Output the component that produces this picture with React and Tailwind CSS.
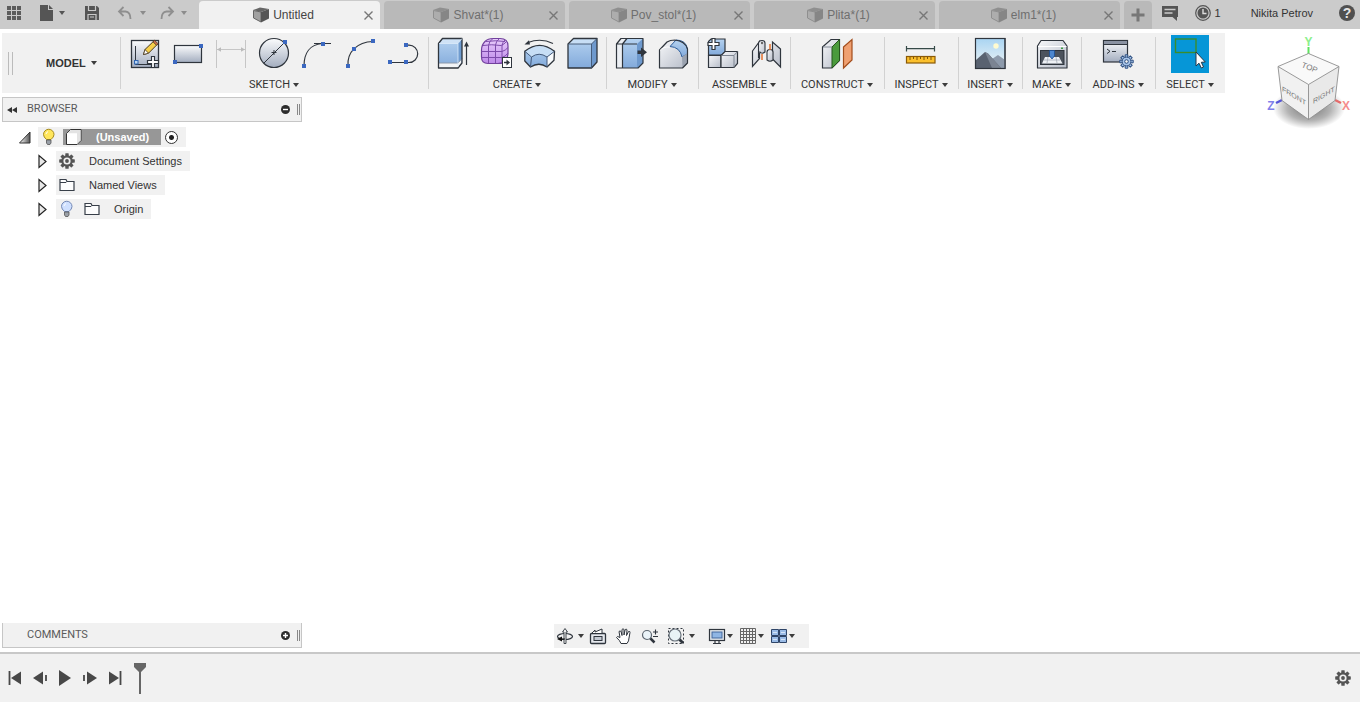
import { useState } from 'react';

const Caret = ({ className = 'text-[#3c3c3c]' }) => (
    <svg width="6" height="4" viewBox="0 0 6 4" className={`shrink-0 ${className}`} fill="currentColor">
        <path d="M0 0h6L3 4z" />
    </svg>
);

const Icon = ({ size = 32, children }) => (
    <svg width={size} height={size} viewBox={`0 0 ${size} ${size}`} className="block shrink-0 overflow-visible" fill="none">
        {children}
    </svg>
);

// Shared gradients, referenced by id from every icon
const Gradients = () => (
    <svg width="0" height="0" className="absolute" aria-hidden="true">
        <defs>
            <linearGradient id="steel" x1="0" y1="0" x2="0" y2="1">
                <stop offset="0" stopColor="#fbfcfd" />
                <stop offset="1" stopColor="#a3adbf" />
            </linearGradient>
            <linearGradient id="pale" x1="0" y1="0" x2="1" y2="1">
                <stop offset="0" stopColor="#f7f8fa" />
                <stop offset="1" stopColor="#b6bcc8" />
            </linearGradient>
            <linearGradient id="blue" x1="0" y1="0" x2="0" y2="1">
                <stop offset="0" stopColor="#b5d2f0" />
                <stop offset="1" stopColor="#82aadb" />
            </linearGradient>
            <linearGradient id="purple" x1="0" y1="0" x2="0" y2="1">
                <stop offset="0" stopColor="#e9cdfc" />
                <stop offset="1" stopColor="#bd88e8" />
            </linearGradient>
            <linearGradient id="sky" x1="0" y1="0" x2="0" y2="1">
                <stop offset="0" stopColor="#a9d4f2" />
                <stop offset="1" stopColor="#f2f6f6" />
            </linearGradient>
            <linearGradient id="corner" x1="0" y1="0" x2="1" y2="0">
                <stop offset="0" stopColor="#fff" />
                <stop offset="1" stopColor="#555" />
            </linearGradient>
            <radialGradient id="cubeShadow">
                <stop offset="0" stopColor="#000" stopOpacity="0.55" />
                <stop offset="0.6" stopColor="#000" stopOpacity="0.3" />
                <stop offset="1" stopColor="#000" stopOpacity="0" />
            </radialGradient>
        </defs>
    </svg>
);

const INK = '#2f353d';

const Dots = ({ points }) => points.map(([x, y]) => (
    <rect key={`${x}-${y}`} x={x - 2} y={y - 2} width="4" height="4" fill="#3b68c0" />
));

const PlusBadge = ({ x, y }) => (
    <path
        transform={`translate(${x} ${y})`}
        d="M-1.5-5.5h3v4h4v3h-4v4h-3v-4h-4v-3h4z"
        fill="#fff" stroke={INK} strokeWidth="1.2"
    />
);

const Gear = ({ size = 16, color = '#555', hole = '#f1f1f1' }) => (
    <Icon size={size}>
        <g transform={`translate(${size / 2} ${size / 2})`}>
            {[0, 45, 90, 135].map((a) => (
                <rect key={a} x="-1.7" y="-7.8" width="3.4" height="15.6" rx="0.6" fill={color} transform={`rotate(${a})`} />
            ))}
            <circle r="5.8" fill={color} />
            <circle r="3.6" fill={hole} />
            <circle r="1.9" fill={color} />
        </g>
    </Icon>
);

/* ---------- toolbar icons ---------- */

const CreateSketch = () => (
    <Icon>
        <rect x="2.5" y="2.5" width="27" height="27" fill="url(#steel)" stroke={INK} strokeWidth="1.3" />
        <path d="M6.5 8v18.5H24" stroke={INK} />
        <rect x="5.5" y="22.5" width="3.5" height="3.5" fill="#bcd6f2" stroke="#2f67b5" />
        <path d="M14.5 16.5l1.5-5L25 2.8l3.5 3.4-9 9z" fill="#f6cf4a" stroke="#4a3a20" />
        <path d="M14.5 16.5l1.5-5 3.5 3.7z" fill="#fff" stroke="#4a3a20" strokeWidth="0.8" />
        <path d="M24 3.8L25.6 2.3l3.5 3.4-1.6 1.6z" fill="#d0704d" stroke="#4a3a20" strokeWidth="0.8" />
        <PlusBadge x={24} y={24} />
    </Icon>
);

const Rectangle = () => (
    <Icon>
        <rect x="2.5" y="7.5" width="27" height="17" fill="url(#steel)" stroke={INK} strokeWidth="1.2" />
        <Dots points={[[29, 8], [3, 24]]} />
    </Icon>
);

const Dimension = () => (
    <Icon>
        <path d="M1.5 2v28M30.5 2v28M2 11.5h28" stroke="#c6c6c6" />
        <path d="M2 11.5l4-2.2v4.4zM30 11.5l-4-2.2v4.4z" fill="#bbb" />
    </Icon>
);

const Circle = () => (
    <Icon>
        <circle cx="16" cy="15" r="14.5" fill="url(#steel)" stroke={INK} strokeWidth="1.2" />
        <path d="M6 25L27 4M13.5 14.5h5M16 12v5" stroke={INK} />
        <Dots points={[[27, 4]]} />
    </Icon>
);

const TangentArc = () => (
    <Icon>
        <path d="M3 28C3 15 9 6.5 21 5.5M13 5.5h17" stroke={INK} strokeWidth="1.2" />
        <Dots points={[[3, 28], [22, 6]]} />
    </Icon>
);

const PointArc = () => (
    <Icon>
        <path d="M4 28C3 14 13 4 29 3.5" stroke={INK} strokeWidth="1.2" />
        <Dots points={[[4, 28], [10, 11], [29, 3]]} />
    </Icon>
);

const Slot = () => (
    <Icon>
        <path d="M3 24.5h19a8.7 8.7 0 0 0 0-17.4h-3" stroke={INK} strokeWidth="1.2" />
        <Dots points={[[3, 24], [19, 24], [19, 7]]} />
    </Icon>
);

const Extrude = () => (
    <Icon>
        <path d="M1.5 5.5l4-5H25V25l-4 5H1.5z" fill="url(#blue)" />
        <path d="M1.5 5.5l4-5H25l-4 5z" fill="#cfe2f6" />
        <path d="M21 5.500l4-5V25l-4 5z" fill="#6f9cd0" />
        <path d="M2 25h19l3.500-4V25L21 30H2z" fill="#f2f4f7" />
        <path d="M1.500 25H21l4-4.500" stroke="#8b98aa" />
        <path d="M1.500 5.500l4-5H25V25l-4 5H1.500z" stroke={INK} strokeWidth="1.3" strokeLinejoin="round" />
        <path d="M2 5.500h19l4-5M21 5.500V29" stroke="#dcebfa" strokeWidth="0.8" />
        <path d="M29.500 27V6" stroke={INK} strokeWidth="1.200" />
        <path d="M27 8.500L29.500 3.500l2.500 5z" fill={INK} />
    </Icon>
);

const Form = () => (
    <Icon>
        <path d="M1.500 12Q1.500 7 5 3.500 8 .5 13 .5h7Q28 .5 28 8v8q0 4-3 7-2.500 2.500-7 2.500H8Q1.500 25.500 1.500 19z" fill="url(#purple)" stroke="#71409c" strokeWidth="1.200" />
        <path d="M3 7.500Q11 6 21 7.500 24 6.500 26.500 3.500M1.500 13.500H22q3.500-1 6-4M1.500 19.500H22q3.500-1 6-4.500M8.500 25V7.500Q9 3 13 .5M15.500 25V7Q16 3 19.500.5M22 25V8Q22.500 4 25 2M6 3.500q10-1.500 19 0" stroke="#7d4bab" />
        <rect x="22.500" y="19.500" width="9" height="10" fill="#fff" stroke={INK} />
        <path d="M24 24.500h3" stroke={INK} strokeWidth="1.500" />
        <path d="M26.500 21.500l3.500 3-3.500 3z" fill={INK} />
    </Icon>
);

const Revolve = () => (
    <Icon>
        <path d="M30 5.500Q18-.5 5 4.500" stroke={INK} strokeWidth="1.100" />
        <path d="M1.500 6.500L6 2.200l1 4.300z" fill={INK} />
        <path d="M1.800 13.300Q16.500 1.500 31.500 13.300l-.5 9L24 29q-8-5.500-16.500 0L1.800 23z" fill="url(#blue)" />
        <path d="M31.500 13.300l-.5 9L24 29V19z" fill="#f8fafc" />
        <path d="M1.800 13.300Q16.500 1.500 31.500 13.300L24 19Q16 13.500 8.500 19z" fill="#c7def5" />
        <path d="M1.800 13.300Q16.500 1.500 31.500 13.300l-.5 9L24 29q-8-5.500-16.500 0L1.800 23z" stroke={INK} strokeWidth="1.300" strokeLinejoin="round" />
        <path d="M1.800 13.300L8.500 19Q16 13.500 24 19l7.500-5.700M8.500 19l-1 10M24 19v10" stroke="#43597a" />
    </Icon>
);

const BoxSolid = () => (
    <Icon>
        <path d="M2 6l5.500-5.500H31V24l-5.500 6H2z" fill="url(#blue)" />
        <path d="M2 6L7.500.5H31L25.500 6z" fill="#c7def5" />
        <path d="M25.500 6L31 .5V24l-5.500 6z" fill="#6e99cd" />
        <path d="M2 6L7.500.5H31V24l-5.500 6H2z" stroke={INK} strokeWidth="1.300" strokeLinejoin="round" />
        <path d="M2.500 6h23L31 .5M25.500 6v24" stroke="#3e5470" strokeWidth="0.900" />
    </Icon>
);

const PressPull = () => (
    <Icon>
        <path d="M1.500 6L6 .5h6L7.500 6v24h-6z" fill="#eceff3" />
        <path d="M7.500 6L12 .5h16V25l-5 5H7.500z" fill="url(#blue)" />
        <path d="M22 6l6-5.500V25l-6 5z" fill="#6e99cd" />
        <path d="M1.500 6L6 .5h22V25l-5 5H1.500zM1.500 6H22M7.500 30V6L12 .5" stroke={INK} strokeWidth="1.200" strokeLinejoin="round" />
        <path d="M22.500 12.500H26v-3l6 4.800-6 4.700v-3h-3.500z" fill={INK} />
    </Icon>
);

const Fillet = () => (
    <Icon>
        <path d="M1.500 12L9 4q3-2 8-2 9 1 12.500 8v15l-5 5h-23z" fill="url(#pale)" />
        <path d="M12 8.500L18 2q10 0 11.500 9v5L24 19q-2-10-12-10.500z" fill="url(#blue)" stroke="#2f5f9c" />
        <path d="M24 19l5.500-4v10l-5 5z" fill="#9aa2af" />
        <path d="M1.500 12L9 4q3-2 8-2 10 1 12.500 9v14l-5 5h-23z" stroke={INK} strokeWidth="1.200" strokeLinejoin="round" />
        <path d="M2 12.500q3-4 10-3.500" stroke="#fff" />
    </Icon>
);

const NewComponent = () => (
    <Icon>
        <path d="M1.500 3.500L4 1h14v13l-3 3H1.500z" fill="url(#blue)" stroke={INK} strokeWidth="1.200" />
        <path d="M1.500 17.500H14v12H1.500z" fill="url(#pale)" stroke={INK} strokeWidth="1.200" />
        <path d="M14 17.500l4-4h12.500v12l-3.500 4H14z" fill="url(#pale)" stroke={INK} strokeWidth="1.200" />
        <path d="M14.500 17.500H27l3.500-4M27 17.500v12" stroke="#7f8793" />
        <PlusBadge x={6.5} y={6} />
    </Icon>
);

const Joint = () => (
    <Icon>
        <path d="M2.500 13l7-9.500v17l-7 8zM30.500 11l-8-7v17l8 8z" fill="url(#pale)" stroke={INK} strokeWidth="1.200" />
        <path d="M8.500 5Q9 2.500 12 2.500T15 5v9q-3 2.500-5 0l-1.500 6z" fill="url(#pale)" stroke={INK} strokeWidth="1.100" />
        <path d="M17 14q0-2.500 3-2.500T23 14v8q-3 2.500-6 0z" fill="url(#pale)" stroke={INK} strokeWidth="1.100" />
        <path d="M12 16v6M20 6v6" stroke="#e37230" strokeWidth="1.500" />
        <circle cx="12" cy="5" r="1.200" fill="#666" />
    </Icon>
);

const OffsetPlane = () => (
    <Icon>
        <path d="M1.500 9L10 1.500h8.500v21L11 30H1.500z" fill="url(#pale)" stroke={INK} strokeWidth="1.200" />
        <path d="M11 9l7.500-7.500v21L11 30z" fill="#4a9a3c" stroke="#25541d" />
        <path d="M2 9h9" stroke="#858c97" />
        <path d="M22.500 9L31 1.500V22L22.500 30z" fill="#efa071" stroke="#a34d1c" strokeWidth="1.200" />
    </Icon>
);

const Measure = () => (
    <Icon>
        <path d="M1.500 8v5.500M29.500 8v5.500M2 10.700h27" stroke="#364a48" strokeWidth="1.200" />
        <rect x="1.500" y="18.500" width="28.500" height="6.500" fill="#fbc02d" stroke="#8b5a07" strokeWidth="1.200" />
        <path d="M5 19v3M8.500 19v2M12 19v3M15.500 19v2M19 19v3M22.500 19v2M26 19v3" stroke="#7d5208" />
    </Icon>
);

const Decal = () => (
    <Icon>
        <rect x="1.500" y=".5" width="29.500" height="30" fill="url(#sky)" stroke={INK} />
        <circle cx="22" cy="8" r="2.700" fill="#fffbd0" />
        <path d="M15 23l9-6 7 5v8H15z" fill="#8d9aab" />
        <path d="M2 22l9-8 3 1.500 13 14.500H2z" fill="#596270" />
        <path d="M11 14l3 1.500L27 30H18z" fill="#7b8492" />
        <rect x="1.500" y=".5" width="29.500" height="30" stroke={INK} strokeWidth="1.200" />
    </Icon>
);

const Print3D = () => (
    <Icon>
        <path d="M1.500 8L5 2.500h22L31 8v22H1.500z" fill="url(#pale)" stroke={INK} strokeWidth="1.200" strokeLinejoin="round" />
        <path d="M2 8.500h28.500" stroke="#fff" />
        <rect x="4.500" y="12.500" width="23.500" height="14" fill="#4c535d" stroke={INK} />
        <path d="M9 19h14l3.500 6.500H6z" fill="#eef1f5" />
        <path d="M8 22h16M12 19l-1 6M20 19l1 6" stroke="#a6adb8" strokeWidth="0.800" />
        <path d="M13.500 12.500h5V18L16 21l-2.500-3z" fill="#4d87cf" stroke="#1d4f94" strokeWidth="0.800" />
        <rect x="25" y="9.500" width="2" height="1.500" fill="#3b9a45" />
    </Icon>
);

const Scripts = () => (
    <Icon>
        <rect x="1.500" y="2.500" width="24" height="21.500" fill="url(#steel)" stroke={INK} strokeWidth="1.200" />
        <rect x="2" y="3" width="23" height="3.500" fill="#8a92a2" />
        <path d="M2 6.500h23" stroke={INK} />
        <path d="M5 11l3 2.300-3 2.300M10 13.500h4" stroke={INK} />
        <g transform="translate(24.500 23.500)" fill="#a9c6ea" stroke="#2c4e80">
            {[0, 45, 90, 135, 180, 225, 270, 315].map((a) => (
                <path key={a} d="M-1.300-4.500v-2.200h2.600v2.200" transform={`rotate(${a})`} />
            ))}
            <circle r="4.400" />
            <circle r="1.800" fill="#f1f1f1" />
        </g>
    </Icon>
);

const SelectTool = () => (
    <Icon size={38}>
        <rect x="4.500" y="4" width="20.500" height="13.500" stroke="#3c8c2b" strokeWidth="1.400" />
        <path d="M25 17v14l3-2.800 2.300 4.800 2.200-1-2.200-4.700 4-.3z" fill="#fff" stroke="#24384a" />
    </Icon>
);

const groups = [
    { label: 'SKETCH', width: 'w-[308px]', icons: [CreateSketch, Rectangle, Dimension, Circle, TangentArc, PointArc, Slot] },
    { label: 'CREATE', width: 'w-[178px]', icons: [Extrude, Form, Revolve, BoxSolid] },
    { label: 'MODIFY', width: 'w-[92px]', icons: [PressPull, Fillet] },
    { label: 'ASSEMBLE', width: 'w-[92px]', icons: [NewComponent, Joint] },
    { label: 'CONSTRUCT', width: 'w-[94px]', icons: [OffsetPlane] },
    { label: 'INSPECT', width: 'w-[74px]', icons: [Measure] },
    { label: 'INSERT', width: 'w-[64px]', icons: [Decal] },
    { label: 'MAKE', width: 'w-[59px]', icons: [Print3D] },
    { label: 'ADD-INS', width: 'w-[74px]', icons: [Scripts] },
    { label: 'SELECT', width: 'w-[70px]', icons: [SelectTool], selected: true },
];

const tabs = ['Untitled', 'Shvat*(1)', 'Pov_stol*(1)', 'Plita*(1)', 'elm1*(1)'];

const TabBar = () => {
    const [active, setActive] = useState(0);

    return (
        <header className="flex h-[29px] bg-[#cbcbcb] text-[#333]">
            <div className="flex w-[199px] shrink-0 items-center pb-[3px] pl-[6px] text-[#555]">
                <button aria-label="Show data panel">
                    <Icon size={16}>
                        <path d="M1 1h4v4H1zM6 1h4v4H6zM11 1h4v4h-4zM1 6h4v4H1zM6 6h4v4H6zM11 6h4v4h-4zM1 11h4v4H1zM6 11h4v4H6zM11 11h4v4h-4z" fill="#5c5c5c" />
                    </Icon>
                </button>
                <button aria-label="File" className="ml-4 flex items-center gap-[5px]">
                    <Icon size={16}>
                        <path d="M2 0h8v5h5v11H2z" fill="#555" />
                        <path d="M11 0l4 4h-4z" fill="#555" />
                    </Icon>
                    <Caret className="text-[#555]" />
                </button>
                <button aria-label="Save" className="ml-[19px]">
                    <Icon size={16}>
                        <path d="M1 1h12l2 2v12H1z" fill="#555" />
                        <path d="M4.500 1v4.500h7V1M4 15V9.500h8V15" stroke="#cbcbcb" strokeWidth="1.200" />
                        <path d="M6 12h4" stroke="#cbcbcb" />
                    </Icon>
                </button>
                <button aria-label="Undo" className="ml-[17px] flex items-center gap-[7px]">
                    <Icon size={16}>
                        <path d="M2 6.500h6.500q5 .5 5 7.500M6.500 2L2 6.500 6.500 11" stroke="#8f8f8f" strokeWidth="1.800" />
                    </Icon>
                    <Caret className="text-[#8c8c8c]" />
                </button>
                <button aria-label="Redo" className="ml-[13px] flex items-center gap-[6px]">
                    <Icon size={16}>
                        <path d="M14 6.500H7.500q-5 .5-5 7.500M9.500 2L14 6.500 9.500 11" stroke="#8f8f8f" strokeWidth="1.800" />
                    </Icon>
                    <Caret className="text-[#8c8c8c]" />
                </button>
            </div>

            <div className="flex gap-1 pt-px text-xs" role="tablist">
                {tabs.map((name, i) => (
                    <div
                        key={name}
                        className={`flex w-[181px] items-center rounded-t pr-[7px] pl-2 ${i === active ? 'bg-[#f1f1f1] text-[#444]' : 'bg-[#b9b9b9] text-[#6f6f6f]'}`}
                    >
                        <button role="tab" aria-selected={i === active} onClick={() => setActive(i)} className="flex h-full flex-1 items-center justify-center gap-1">
                            <Icon size={16}>
                                <g opacity={i === active ? 1 : 0.5}>
                                    <path d="M0 3L7 .5l9 1.500-8 3z" fill="#666" />
                                    <path d="M.5 3.500L8 5v10l-7.500-4z" fill="#a2a2a2" stroke="#666" />
                                    <path d="M8 5l8-3v9.500l-8 4z" fill="#555" />
                                </g>
                            </Icon>
                            {name}
                        </button>
                        <button aria-label={`Close ${name}`} className="ml-1">
                            <Icon size={9}>
                                <path d="M.5.5l8 8M8.500.5l-8 8" stroke="#777" strokeWidth="1.400" />
                            </Icon>
                        </button>
                    </div>
                ))}
                <button aria-label="New design" className="flex w-7 items-center justify-center rounded-t bg-[#b9b9b9]">
                    <Icon size={14}>
                        <path d="M7 .5v13M.5 7h13" stroke="#777" strokeWidth="3" />
                    </Icon>
                </button>
            </div>

            <div className="ml-auto flex items-center pr-[5px] pb-[3px] text-[11px]">
                <button aria-label="Comments">
                    <Icon size={16}>
                        <path d="M0 1h16v11h-1v4l-4.500-4H0z" fill="#555" />
                        <path d="M2.500 4.500h11M2.500 8h8" stroke="#cbcbcb" strokeWidth="1.300" />
                    </Icon>
                </button>
                <button aria-label="Job status" className="ml-[17px] flex items-center gap-1">
                    <Icon size={16}>
                        <circle cx="8" cy="8" r="7.300" stroke="#555" strokeWidth="1.200" />
                        <circle cx="8" cy="8" r="5.500" fill="#555" />
                        <path d="M8 4v4.500h3.500" stroke="#ddd" strokeWidth="1.400" />
                    </Icon>
                    1
                </button>
                <button className="ml-[30px]">Nikita Petrov</button>
                <button aria-label="Help" className="ml-[26px] flex size-4 items-center justify-center rounded-full bg-[#505050] text-sm font-bold text-[#e4e4e4]">?</button>
            </div>
        </header>
    );
};

const Toolbar = () => (
    <div className="mt-1 ml-[2px] flex h-[60px] w-fit bg-[#f1f1f1] text-[11px] text-[#333]">
        <div className="flex w-[118px] items-center pl-[6px]">
            <div className="h-[23px] w-[5px] border-x border-[#bbb]" />
            <button className="ml-[33px] flex items-center gap-[5px] text-[11px] font-bold">
                MODEL <Caret />
            </button>
        </div>
        {groups.map((group) => (
            <div key={group.label} className={`relative flex flex-col items-center ${group.width}`}>
                <div className="absolute top-1 left-0 h-[52px] w-px bg-[#d2d2d2]" />
                <div className={`flex h-[45px] gap-[11px] ${group.selected ? 'pt-[2px]' : 'pt-[5px]'}`}>
                    {group.icons.map((ToolIcon) => (
                        <button key={ToolIcon.name} aria-label={group.label} className={group.selected ? 'size-[38px] bg-[#0696d7]' : 'size-8'}>
                            <ToolIcon />
                        </button>
                    ))}
                </div>
                <button className="flex items-center gap-[3px] font-['Roboto',sans-serif] leading-4">
                    {group.label} <Caret />
                </button>
            </div>
        ))}
    </div>
);

const Panel = ({ title, open }) => (
    <div className={`flex h-[25px] w-[300px] items-center border-[#c6c6c6] bg-[#f1f1f1] text-[#5a5a5a] ${open ? 'border' : 'border-x border-b'}`}>
        <div className="flex w-6 items-center pl-1">
            {open && (
                <button aria-label="Collapse browser">
                    <Icon size={10}>
                        <path d="M5 2v6L0 5zM10 2v6L5 5z" fill="#333" />
                    </Icon>
                </button>
            )}
        </div>
        <span className="flex-1 font-['Roboto',sans-serif] text-[11px]">{title}</span>
        <button aria-label={`Toggle ${title.toLowerCase()}`}>
            <Icon size={9}>
                <circle cx="4.500" cy="4.500" r="4.500" fill="#2d2d2d" />
                <path d={open ? 'M2 4.500h5' : 'M2 4.500h5M4.500 2v5'} stroke="#fff" strokeWidth="1.400" />
            </Icon>
        </button>
        <div className="mr-px ml-[7px] h-[11px] w-[3px] border-x border-[#888]" />
    </div>
);

const Bulb = ({ fill, stroke }) => (
    <Icon size={16}>
        <path d="M5.500 10.500Q2.500 8 2.500 5.500a5 5 0 0 1 10.500 0q0 2.500-3 5z" fill={fill} stroke={stroke} />
        <path d="M5.500 11H10v3l-1 1.500H6.500l-1-1.500z" fill="#9aa0a8" stroke="#555" strokeWidth="0.800" />
        <path d="M5 5q.5-2 2-2.300" stroke="#fff" />
    </Icon>
);

const Folder = () => (
    <Icon size={16}>
        <path d="M1 13.500v-11h6l1 2h7v9z" fill="#fdfdfd" stroke="#383f49" strokeWidth="1.200" />
        <path d="M1 5.500h6l1-1" stroke="#383f49" />
    </Icon>
);

const TreeRow = ({ label, children }) => (
    <li className="flex items-center">
        <button aria-label={`Expand ${label}`} className="w-5">
            <Icon size={13}>
                <path d="M3 .5v12l7-6z" fill="#e8e8e8" stroke="#222" strokeWidth="1.200" />
            </Icon>
        </button>
        <div className="flex h-5 items-center bg-[#f1f1f1] pr-2 pl-[3px]">
            {children}
            <span className="ml-[14px]">{label}</span>
        </div>
    </li>
);

const Browser = () => (
    <aside className="mt-1 ml-[2px] w-[300px] text-[11px] text-[#333]">
        <Panel title="BROWSER" open />
        <div className="mt-[5px] flex items-center pl-4">
            <button aria-label="Collapse document" className="w-5">
                <Icon size={13}>
                    <path d="M1.500 12L12 1v11z" fill="url(#corner)" stroke="#333" />
                </Icon>
            </button>
            <div className="flex h-5 items-center bg-[#f1f1f1] pr-2 pl-[3px]">
                <Bulb fill="#ffe65c" stroke="#a58a1c" />
                <button className="ml-[6px] flex h-4 w-[98px] items-center bg-[#979797] pl-[3px] text-[11px] font-bold text-white">
                    <Icon size={16}>
                        <path d="M.5 4.500L4.500.5H15v11L11 15.500H.5z" fill="#fff" stroke="#333" strokeLinejoin="round" />
                        <path d="M1 4.500h10V15l3.500-3.700V1H4.700z" fill="#e3e3e3" />
                        <path d="M1 4.500h10V15H1z" fill="#fff" />
                    </Icon>
                    <span className="ml-[14px]">(Unsaved)</span>
                </button>
                <input
                    type="radio"
                    name="active-component"
                    aria-label="Activate component"
                    defaultChecked
                    className="ml-1 size-[13px] appearance-none rounded-full border border-[#333] bg-[radial-gradient(circle,#222_0_2px,#fff_3px)]"
                />
            </div>
        </div>
        <ul className="mt-1 space-y-1 pl-[34px]">
            <TreeRow label="Document Settings"><Gear /></TreeRow>
            <TreeRow label="Named Views"><Folder /></TreeRow>
            <TreeRow label="Origin">
                <Bulb fill="#cfe0ff" stroke="#7388b5" />
                <span className="ml-[9px]"><Folder /></span>
            </TreeRow>
        </ul>
    </aside>
);

const ViewCube = () => (
    <svg className="absolute top-[34px] right-2" width="88" height="98" viewBox="0 0 88 98" fontFamily="Liberation Sans, sans-serif">
        <ellipse cx="45" cy="74" rx="36" ry="21" fill="url(#cubeShadow)" />
        <path d="M44.500 13v7" stroke="#5fe35f" strokeWidth="2" />
        <path d="M18 66l-6 3" stroke="#5656d8" strokeWidth="2.500" />
        <path d="M71 66l6 3" stroke="#e56b6b" strokeWidth="2.500" />
        <path d="M44.500 19.500L75 32.500 44.500 50.500 14 32.500z" fill="#f9f9f9" />
        <path d="M14 32.500l30.500 18v35L18 66.500z" fill="#f1f1f1" />
        <path d="M75 32.500l-30.500 18v35L71 66.500z" fill="#e9e9e9" />
        <path d="M44.500 19.500L75 32.500 71 66.500 44.500 85.500 18 66.500 14 32.500zM14 32.500l30.500 18 30.500-18M44.500 50.500v35" fill="none" stroke="#8f8f8f" strokeWidth="0.900" />
        <g fill="#777" fontSize="7">
            <text fontSize="8" transform="translate(37 33) rotate(22)">TOP</text>
            <text transform="translate(18 57) skewY(31)">FRONT</text>
            <text transform="translate(49 70) skewY(-31)">RIGHT</text>
        </g>
        <g fontSize="12" fontWeight="bold" textAnchor="middle">
            <text x="44.500" y="12" fill="#8cf08c">Y</text>
            <text x="7" y="76" fill="#8080ea">Z</text>
            <text x="82" y="76" fill="#f58c8c">X</text>
        </g>
    </svg>
);

const NavBar = () => (
    <nav className="flex h-6 items-center bg-[#f1f1f1] pr-[14px] pl-[2px]">
        <button aria-label="Orbit" className="flex items-center gap-1">
            <Icon size={18}>
                <ellipse cx="9" cy="9.500" rx="7.500" ry="3" stroke={INK} strokeWidth="1.200" />
                <path d="M8 16.500V5H6.500L9 1.500 11.500 5H10v11.500z" fill="#f1f1f1" stroke={INK} strokeWidth="0.900" />
                <path d="M1 12l5-2.500v5z" fill="#111" />
                <path d="M5 12h4" stroke="#111" />
            </Icon>
            <Caret />
        </button>
        <button aria-label="Look at" className="ml-[5px]">
            <Icon size={18}>
                <rect x="1.500" y="6.500" width="15" height="10" rx="1" fill="#e6e9ee" stroke={INK} strokeWidth="1.300" />
                <rect x="5" y="9.500" width="8" height="4" fill="#c4cad3" stroke={INK} />
                <path d="M3 6l3-3v2l7-3v4" stroke={INK} fill="#fff" />
            </Icon>
        </button>
        <button aria-label="Pan" className="ml-2">
            <Icon size={18}>
                <path d="M6 16.500q-1-3-4.500-6 .5-2 3.500 0L4 4.500q1.500-1.500 2.200.5L7 8.500V2.500q1-1.500 2 0V8l1.200-5.500q1.500-1 1.800.5l-.5 5.500 2-4q1.800-.5 1.500 1L14 11q0 3-2 5.500z" fill="#fff" stroke={INK} />
            </Icon>
        </button>
        <button aria-label="Zoom" className="ml-2">
            <Icon size={18}>
                <path d="M9 11l4.500 4.500" stroke={INK} strokeWidth="2.500" />
                <circle cx="6" cy="8" r="4.500" fill="#eaf3f8" stroke="#5d6670" strokeWidth="1.200" />
                <path d="M12 5h5M14.500 2.500v5M12 9.500h5" stroke={INK} strokeWidth="1.100" />
            </Icon>
        </button>
        <button aria-label="Fit" className="ml-2 flex items-center gap-1">
            <Icon size={18}>
                <rect x="1.500" y="1.500" width="15" height="15" stroke={INK} strokeDasharray="2 2" />
                <path d="M11.500 11.500L16 16" stroke={INK} strokeWidth="2.800" />
                <circle cx="8" cy="8" r="6" fill="#e8f3f6" stroke="#6a737c" strokeWidth="1.200" />
            </Icon>
            <Caret />
        </button>
        <button aria-label="Display settings" className="ml-[13px] flex items-center gap-px">
            <Icon size={18}>
                <rect x="1.500" y="2.500" width="15" height="11" fill="#e4e8ee" stroke={INK} strokeWidth="1.200" />
                <rect x="4" y="5" width="10" height="6" fill="#8fb5e4" stroke="#43679b" />
                <path d="M7 14v2M11 14v2M5 16.500h8" stroke={INK} strokeWidth="1.200" />
            </Icon>
            <Caret />
        </button>
        <button aria-label="Grid and snaps" className="ml-[6px] flex items-center gap-px">
            <Icon size={18}>
                <path d="M1.500 1.500h15v15h-15zM4.500 1.500v15M7.500 1.500v15M10.500 1.500v15M13.500 1.500v15M1.500 4.500h15M1.500 7.500h15M1.500 10.500h15M1.500 13.500h15" stroke="#666" />
            </Icon>
            <Caret />
        </button>
        <button aria-label="Viewports" className="ml-[6px] flex items-center gap-px">
            <Icon size={18}>
                <path d="M1.500 2.500h7v6h-7zM9.500 2.500h7v6h-7zM1.500 9.500h7v6h-7zM9.500 9.500h7v6h-7z" fill="#9abbe6" stroke="#2f4568" />
                <path d="M3 5.500h4M11 5.500h4M3 12.500h4M11 12.500h4" stroke="#d5e4f7" />
            </Icon>
            <Caret />
        </button>
    </nav>
);

const playback = [
    { label: 'Go to start', bar: 'M2.500 1v14', d: 'M4 8l10-6.500v13z' },
    { label: 'Step back', bar: 'M14 5v6', d: 'M1 8l10-6.500v13z' },
    { label: 'Play', bar: '', d: 'M2 0l12 8-12 8z' },
    { label: 'Step forward', bar: 'M2 5v6', d: 'M15 8L5 1.500v13z' },
    { label: 'Go to end', bar: 'M13.500 1v14', d: 'M12 8L2 1.500v13z' },
];

const Timeline = () => (
    <footer className="flex h-[50px] items-center border-t-2 border-[#c8c8c8] bg-[#f1f1f1] px-[7px]">
        <div className="flex gap-[9px]">
            {playback.map(({ label, bar, d }) => (
                <button key={label} aria-label={label}>
                    <Icon size={16}>
                        <path d={d} fill="#484848" />
                        <path d={bar} stroke="#484848" strokeWidth="1.800" />
                    </Icon>
                </button>
            ))}
        </div>
        <svg className="ml-[11px]" width="12" height="32" viewBox="0 0 12 32" fill="#666">
            <path d="M0 1h12v4L7 10v22H5V10L0 5z" />
        </svg>
        <button aria-label="Timeline settings" className="ml-auto mr-[2px]">
            <Gear />
        </button>
    </footer>
);

const App = () => (
    <div className="relative flex min-h-screen flex-col bg-white font-['Liberation_Sans',sans-serif]">
        <Gradients />
        <TabBar />
        <Toolbar />
        <ViewCube />
        <main className="flex flex-1 flex-col justify-between">
            <Browser />
            <div className="mb-1 grid grid-cols-[1fr_auto_1fr] items-end pl-[2px]">
                <Panel title="COMMENTS" />
                <NavBar />
            </div>
        </main>
        <Timeline />
    </div>
);

export default App;
